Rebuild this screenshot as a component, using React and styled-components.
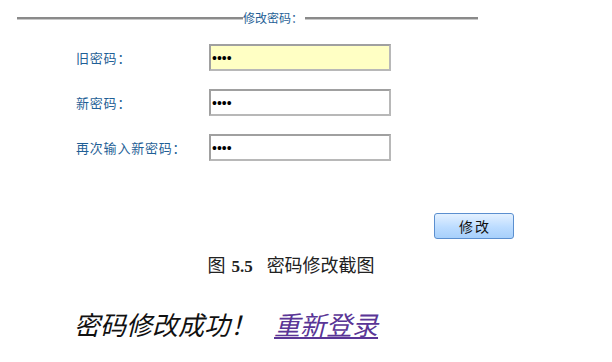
import React from "react";
import styled, { createGlobalStyle } from "styled-components";

const GlobalStyle = createGlobalStyle`
  html, body {
    margin: 0;
    padding: 0;
    background: #fff;
  }
  body {
    font-family: "Noto Sans CJK SC", "Noto Sans", sans-serif;
  }
`;

const Page = styled.div`
  width: 612px;
  height: 362px;
  overflow: hidden;
  display: flex;
  flex-direction: column;
`;

const Legend = styled.div`
  display: flex;
  align-items: center;
  margin: 9px 0 0 17px;
  height: 18px;
`;

const Rule = styled.div`
  flex-shrink: 0;
  width: ${p => p.w}px;
  height: 2px;
  background: #8a8a8a;
  border-bottom: 1px solid #c8c8c8;
`;

const LegendText = styled.span`
  flex-shrink: 0;
  white-space: nowrap;
  color: #1f5f96;
  font-size: 12px;
  line-height: 18px;
  width: 62px;
`;

const Form = styled.div`
  display: flex;
  flex-direction: column;
  gap: 18px;
  margin: 17px 0 0 76px;
`;

const Row = styled.div`
  display: flex;
  align-items: center;
  height: 27px;
`;

const Label = styled.label`
  width: 133px;
  color: #1f5f96;
  font-size: 13px;
  letter-spacing: 0.8px;
`;

const Field = styled.input`
  box-sizing: border-box;
  width: 182px;
  height: 27px;
  border: 2px solid #a0a0a0;
  border-right-color: #b8b8b8;
  border-bottom-color: #b8b8b8;
  background: ${p => (p.focus ? "#ffffc4" : "#fff")};
  padding: 0 1px;
  font-family: "Liberation Sans", sans-serif;
  font-size: 14px;
  color: #000;
  outline: none;
`;

const Actions = styled.div`
  display: flex;
  justify-content: flex-end;
  padding-right: 98px;
  margin-top: 52px;
`;

const Button = styled.button`
  box-sizing: border-box;
  width: 80px;
  height: 26px;
  border: 1px solid #5b8fcf;
  border-radius: 3px;
  background: linear-gradient(#e4f1ff, #bcdcff 55%, #a7d0fb);
  color: #111;
  font-family: "Noto Sans CJK SC", sans-serif;
  font-size: 14px;
  letter-spacing: 2px;
  padding: 0 0 0 2px;
`;

const Caption = styled.div`
  display: flex;
  align-items: baseline;
  justify-content: center;
  margin-top: 12px;
  padding-right: 30px;
  font-family: "Liberation Serif", "Noto Sans CJK SC", serif;
  font-size: 18px;
  color: #222;
`;

const CaptionNum = styled.span`
  margin: 0 14px 0 6px;
  font-weight: bold;
  font-size: 17px;
`;

const Result = styled.div`
  display: flex;
  align-items: baseline;
  gap: 18px;
  margin: 28px 0 0 74px;
  font-size: 26px;
  font-style: italic;
`;

const Success = styled.span`
  color: #111;
`;

const Relogin = styled.a`
  color: #5a3596;
  text-decoration: underline;
  text-decoration-thickness: 2px;
  text-underline-offset: 2px;
  cursor: pointer;
`;

export default function App() {
  return (
    <Page>
      <GlobalStyle />
      <Legend>
        <Rule w={226} />
        <LegendText>修改密码：</LegendText>
        <Rule w={173} />
      </Legend>
      <Form>
        <Row>
          <Label>旧密码：</Label>
          <Field type="password" defaultValue="1234" focus />
        </Row>
        <Row>
          <Label>新密码：</Label>
          <Field type="password" defaultValue="1234" />
        </Row>
        <Row>
          <Label>再次输入新密码：</Label>
          <Field type="password" defaultValue="1234" />
        </Row>
      </Form>
      <Actions>
        <Button>修改</Button>
      </Actions>
      <Caption>
        <span>图</span>
        <CaptionNum>5.5</CaptionNum>
        <span>密码修改截图</span>
      </Caption>
      <Result>
        <Success>密码修改成功！</Success>
        <Relogin>重新登录</Relogin>
      </Result>
    </Page>
  );
}
